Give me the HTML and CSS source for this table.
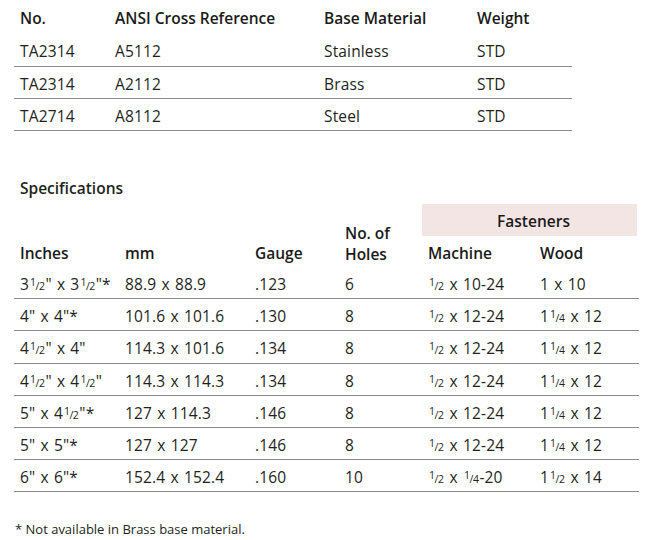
FILE: index.html
```html
<!DOCTYPE html>
<html>
<head>
<meta charset="utf-8">
<link rel="stylesheet" href="styles.css">
</head>
<body>
<div class="page">
  <table class="ref">
    <colgroup><col class="c1"><col class="c2"><col class="c3"><col class="c4"></colgroup>
    <thead>
      <tr><th>No.</th><th>ANSI Cross Reference</th><th>Base Material</th><th>Weight</th></tr>
    </thead>
    <tbody>
      <tr><td>TA2314</td><td>A5112</td><td>Stainless</td><td>STD</td></tr>
      <tr><td>TA2314</td><td>A2112</td><td>Brass</td><td>STD</td></tr>
      <tr><td>TA2714</td><td>A8112</td><td>Steel</td><td>STD</td></tr>
    </tbody>
  </table>

  <h2 class="title">Specifications</h2>

  <table class="spec">
    <colgroup><col class="s1"><col class="s2"><col class="s3"><col class="s4"><col class="s5"><col class="s6"></colgroup>
    <thead>
      <tr class="top">
        <th colspan="3"></th>
        <th rowspan="2" class="holes">No. of<br>Holes</th>
        <th colspan="2" class="fast"><div class="fastbox">Fasteners</div></th>
      </tr>
      <tr class="sub">
        <th>Inches</th><th>mm</th><th>Gauge</th><th>Machine</th><th>Wood</th>
      </tr>
    </thead>
    <tbody>
      <tr><td>3<span class="fr"><span class="n">1</span>/<span class="d">2</span></span>" x 3<span class="fr"><span class="n">1</span>/<span class="d">2</span></span>"*</td><td>88.9 x 88.9</td><td>.123</td><td>6</td><td><span class="fr"><span class="n">1</span>/<span class="d">2</span></span> x 10-24</td><td>1 x 10</td></tr>
      <tr><td>4" x 4"*</td><td>101.6 x 101.6</td><td>.130</td><td>8</td><td><span class="fr"><span class="n">1</span>/<span class="d">2</span></span> x 12-24</td><td>1<span class="fr"><span class="n">1</span>/<span class="d">4</span></span> x 12</td></tr>
      <tr><td>4<span class="fr"><span class="n">1</span>/<span class="d">2</span></span>" x 4"</td><td>114.3 x 101.6</td><td>.134</td><td>8</td><td><span class="fr"><span class="n">1</span>/<span class="d">2</span></span> x 12-24</td><td>1<span class="fr"><span class="n">1</span>/<span class="d">4</span></span> x 12</td></tr>
      <tr><td>4<span class="fr"><span class="n">1</span>/<span class="d">2</span></span>" x 4<span class="fr"><span class="n">1</span>/<span class="d">2</span></span>"</td><td>114.3 x 114.3</td><td>.134</td><td>8</td><td><span class="fr"><span class="n">1</span>/<span class="d">2</span></span> x 12-24</td><td>1<span class="fr"><span class="n">1</span>/<span class="d">4</span></span> x 12</td></tr>
      <tr><td>5" x 4<span class="fr"><span class="n">1</span>/<span class="d">2</span></span>"*</td><td>127 x 114.3</td><td>.146</td><td>8</td><td><span class="fr"><span class="n">1</span>/<span class="d">2</span></span> x 12-24</td><td>1<span class="fr"><span class="n">1</span>/<span class="d">4</span></span> x 12</td></tr>
      <tr><td>5" x 5"*</td><td>127 x 127</td><td>.146</td><td>8</td><td><span class="fr"><span class="n">1</span>/<span class="d">2</span></span> x 12-24</td><td>1<span class="fr"><span class="n">1</span>/<span class="d">4</span></span> x 12</td></tr>
      <tr><td>6" x 6"*</td><td>152.4 x 152.4</td><td>.160</td><td>10</td><td><span class="fr"><span class="n">1</span>/<span class="d">2</span></span> x <span class="fr"><span class="n">1</span>/<span class="d">4</span></span>-20</td><td>1<span class="fr"><span class="n">1</span>/<span class="d">2</span></span> x 14</td></tr>
    </tbody>
  </table>

  <p class="note">* Not available in Brass base material.</p>
</div>
</body>
</html>
```

FILE: styles.css
```css
html, body {
  margin: 0;
  padding: 0;
  background: #ffffff;
}
body {
  font-family: "Open Sans", "Liberation Sans", sans-serif;
  color: #231f20;
  font-size: 15.5px;
}
.page {
  padding: 2px 0 0 14px;
}
table {
  border-collapse: collapse;
  table-layout: fixed;
}
th, td {
  padding: 0 0 0 6px;
  text-align: left;
  white-space: nowrap;
  overflow: visible;
}
td {
  padding-top: 3px;
  word-spacing: 1px;
  letter-spacing: 0.15px;
}
th {
  font-weight: 600;
  color: #1a1a1a;
}

.ref { width: 558px; }
.ref .c1 { width: 95px; }
.ref .c2 { width: 209px; }
.ref .c3 { width: 153px; }
.ref .c4 { width: 101px; }
.ref thead tr { height: 32px; }
.ref tbody tr { height: 32px; }
.ref td {
  border-bottom: 1px solid #8a8a8a;
}

.title {
  margin: 45px 0 0 6px;
  font-size: 15.5px;
  font-weight: 600;
  line-height: 24px;
  height: 24px;
}

.spec { width: 625px; margin-top: 4px; }
.spec .s1 { width: 105px; }
.spec .s2 { width: 130px; }
.spec .s3 { width: 90px; }
.spec .s4 { width: 83px; }
.spec .s5 { width: 112px; }
.spec .s6 { width: 105px; }
.spec .top { height: 32px; }
.spec .fast {
  text-align: center;
  padding: 0 2px 0 0;
  vertical-align: top;
}
.fastbox {
  background: #f4e5e5;
  height: 32px;
  line-height: 34px;
  padding-left: 8px;
  box-sizing: border-box;
}
.spec .holes {
  vertical-align: bottom;
  line-height: 21px;
  padding-bottom: 2px;
}
.spec .sub { height: 31px; }
.spec .sub th { padding-top: 3px; }
.spec tbody tr { height: 32.2px; }
.spec td {
  border-bottom: 1px solid #8a8a8a;
}

.fr {
  font-size: 10.5px;
  letter-spacing: -0.5px;
  margin: 0 1px 0 1px;
  word-spacing: 0;
}
.fr .n { position: relative; top: -4px; }
.fr .d { position: relative; top: 0; }

.note {
  margin: 29px 0 0 1px;
  font-size: 13px;
  line-height: 16px;
}
```
